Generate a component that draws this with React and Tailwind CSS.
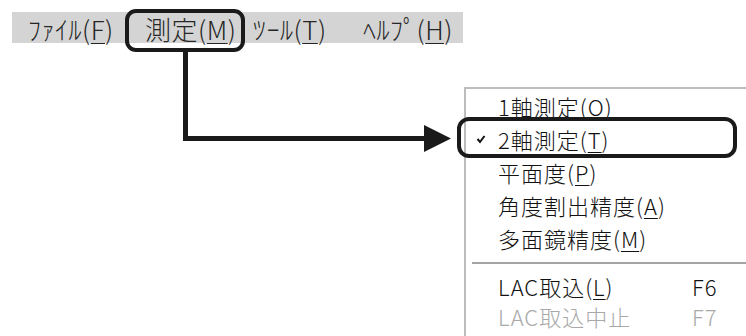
import React from "react";

const font = { fontFamily: '"Noto Sans CJK JP", "Noto Sans", sans-serif' };

function U({ children }) {
  return <span className="underline decoration-1 underline-offset-[3px]">{children}</span>;
}

function Check() {
  return (
    <svg width="10" height="10" viewBox="0 0 10 10" className="block">
      <path d="M1.5 5 L4 8 L8.5 2" fill="none" stroke="#111" strokeWidth="2" />
    </svg>
  );
}

function Item({ children, check, shortcut, disabled, h = "h-[33px]" }) {
  return (
    <div className={`flex items-center ${h} ${disabled ? "text-[#a8a8a8]" : "text-[#111]"}`}>
      <div className="w-[32px] flex justify-end pr-[12px]">{check ? <Check /> : null}</div>
      <div className="w-[194px] whitespace-nowrap">{children}</div>
      {shortcut ? <div className="whitespace-nowrap">{shortcut}</div> : null}
    </div>
  );
}

export default function App() {
  return (
    <div className="relative w-[746px] h-[336px] bg-white overflow-hidden font-light" style={font}>
      {/* menu bar */}
      <div className="pt-[12px] pl-[12px]">
        <div className="w-[451px] h-[31px] bg-[#d4d4d4] flex items-center pl-[16px] text-[26px] leading-none text-[#262626] tracking-[0.5px] pt-[2px]">
          <span className="w-[117px] whitespace-nowrap">ﾌｧｲﾙ(<U>F</U>)</span>
          <span className="w-[108px] whitespace-nowrap">測定(<U>M</U>)</span>
          <span className="w-[110px] whitespace-nowrap">ﾂｰﾙ(<U>T</U>)</span>
          <span className="whitespace-nowrap">ﾍﾙﾌﾟ(<U>H</U>)</span>
        </div>
      </div>

      {/* dropdown menu */}
      <div className="ml-[464px] mt-[44px] border-l-2 border-t-2 border-[#bdbdbd] h-[260px] text-[22px] leading-none tracking-[1px]">
        <Item>1軸測定(O)</Item>
        <Item check>2軸測定(<U>T</U>)</Item>
        <Item>平面度(<U>P</U>)</Item>
        <Item>角度割出精度(<U>A</U>)</Item>
        <Item>多面鏡精度(<U>M</U>)</Item>
        <div className="h-[17px] flex items-center pl-[6px]">
          <div className="flex-1 h-[2px] bg-[#a3a3a3]" />
        </div>
        <Item h="h-[30px]" shortcut="F6">LAC取込(<U>L</U>)</Item>
        <Item h="h-[30px]" shortcut="F7" disabled>LAC取込中止</Item>
      </div>

      {/* callout boxes */}
      <div className="absolute left-[125px] top-[9px] w-[120px] h-[43px] border-4 border-[#1a1a1a] rounded-[11px]" />
      <div className="absolute left-[457px] top-[117px] w-[280px] h-[41px] border-4 border-[#1a1a1a] rounded-[12px]" />

      {/* connector arrow */}
      <svg className="absolute left-0 top-0" width="746" height="336" viewBox="0 0 746 336">
        <path d="M185.5 52 V138.5 H428" fill="none" stroke="#1a1a1a" strokeWidth="5" />
        <polygon points="424,125 451,138.5 424,152" fill="#1a1a1a" />
      </svg>
    </div>
  );
}
